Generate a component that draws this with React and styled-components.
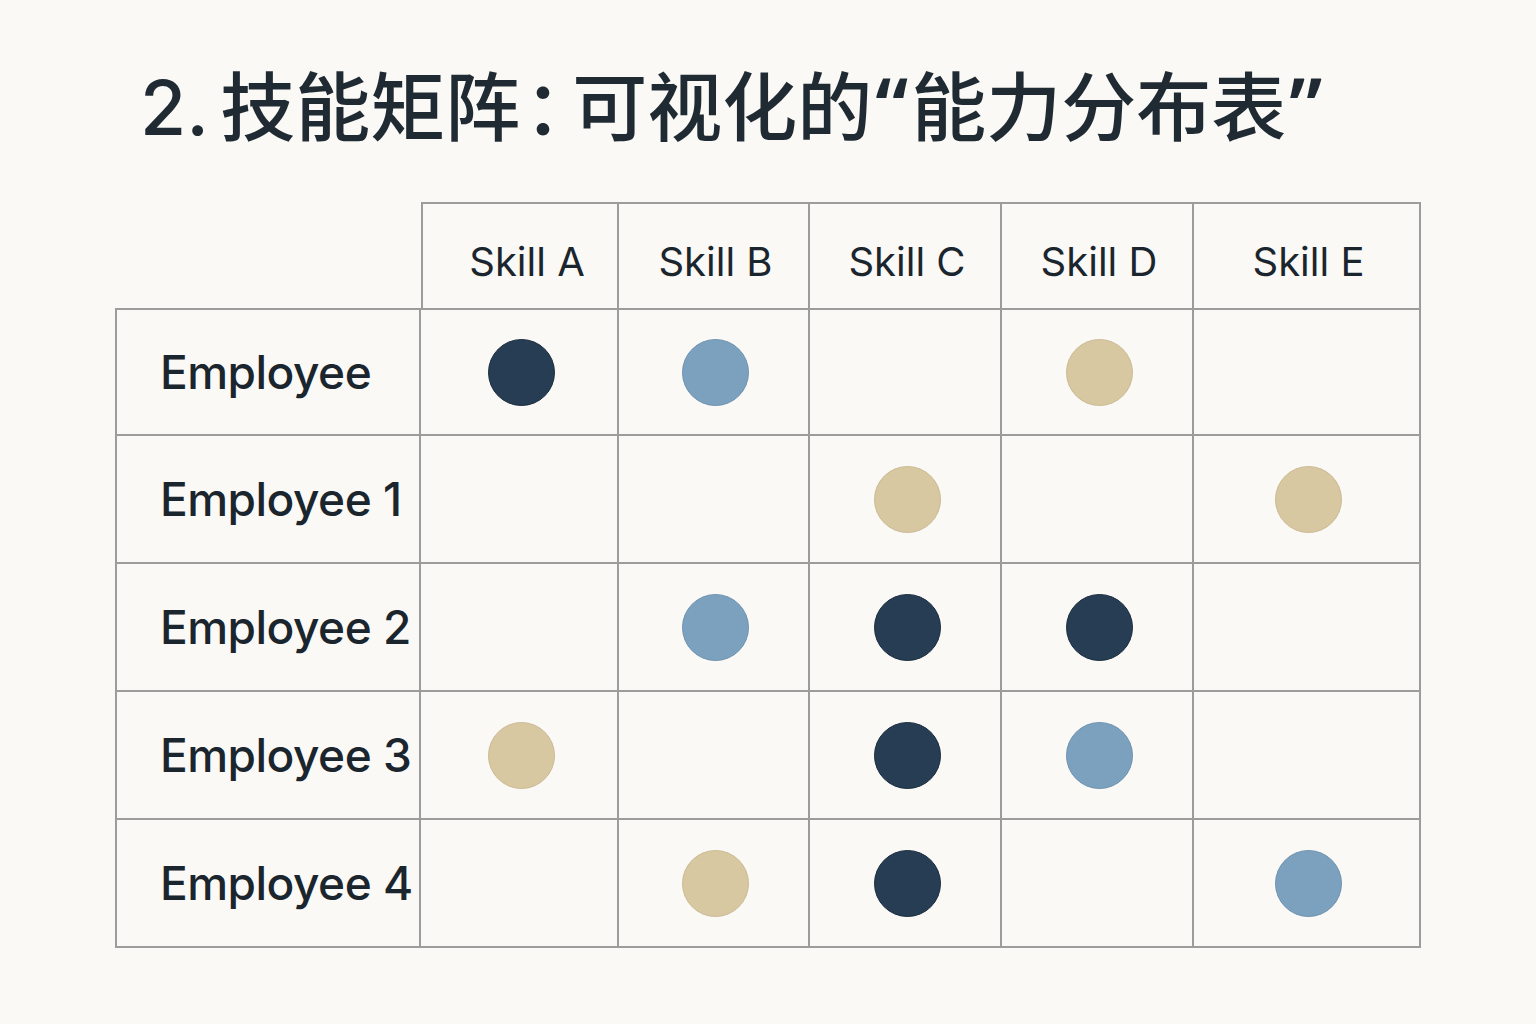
import React from "react";
import styled, { createGlobalStyle } from "styled-components";

const GlobalStyle = createGlobalStyle`
  html, body {
    margin: 0;
    padding: 0;
    background: #faf9f5;
  }
  body {
    font-family: Inter, "Noto Sans CJK SC", sans-serif;
    color: #1e2831;
  }
`;

const skills = ["Skill A", "Skill B", "Skill C", "Skill D", "Skill E"];

const rows = [
  { name: "Employee", levels: ["dark", "blue", null, "tan", null] },
  { name: "Employee 1", levels: [null, null, "tan", null, "tan"] },
  { name: "Employee 2", levels: [null, "blue", "dark", "dark", null] },
  { name: "Employee 3", levels: ["tan", null, "dark", "blue", null] },
  { name: "Employee 4", levels: [null, "tan", "dark", null, "blue"] },
];

const dotColors = {
  dark: { fill: "#263d53", edge: "#1a2c3d" },
  blue: { fill: "#7ca1bf", edge: "#6f93b0" },
  tan: { fill: "#d7c8a2", edge: "#cbbb93" },
};

const App = () => {
  return (
    <Page>
      <GlobalStyle />
      <Title>
        2. 技能矩阵<Colon>：</Colon>可视化的<Quote>“</Quote>能力分布表<Quote>”</Quote>
      </Title>
      <Matrix>
        <Corner />
        {skills.map((s, i) => (
          <HeaderCell key={s} $first={i === 0}>
            {s}
          </HeaderCell>
        ))}
        {rows.map((row, r) => (
          <React.Fragment key={row.name}>
            <NameCell $first={r === 0}>{row.name}</NameCell>
            {row.levels.map((lvl, c) => (
              <Cell key={c}>{lvl && <Dot $level={lvl} />}</Cell>
            ))}
          </React.Fragment>
        ))}
      </Matrix>
    </Page>
  );
};

const Page = styled.div`
  width: 1536px;
  height: 1024px;
  padding: 60px 0 0 0;
  box-sizing: border-box;
`;

const Title = styled.h1`
  margin: 0 0 0 140px;
  font-family: Inter, "Noto Sans CJK SC", sans-serif;
  font-size: 75px;
  font-weight: 500;
  line-height: 88px;
  word-spacing: -8px;
  color: #1f2a33;
  white-space: nowrap;
`;

const Colon = styled.span`
  margin-left: 4px;
  letter-spacing: -27px;
`;

const Quote = styled.span`
  font-family: "Noto Sans", sans-serif;
  font-weight: 600;
  font-size: 80px;
  margin: 0 3px;
`;

const Matrix = styled.div`
  display: grid;
  grid-template-columns: 306px 198px 191px 192px 192px 227px;
  grid-template-rows: 106px repeat(5, 128px);
  margin: 50px 0 0 115px;
  width: max-content;
`;

const line = "2px solid #9c9c9c";

const Corner = styled.div``;

const HeaderCell = styled.div`
  display: flex;
  align-items: center;
  justify-content: center;
  padding: 10px 0 0 ${(p) => (p.$first ? "14px" : "4px")};
  border-top: ${line};
  border-right: ${line};
  border-left: ${(p) => (p.$first ? line : "none")};
  font-size: 40px;
  font-weight: 400;
  color: #1b252e;
`;

const NameCell = styled.div`
  display: flex;
  align-items: center;
  padding-left: 43px;
  border-left: ${line};
  border-right: ${line};
  border-bottom: ${line};
  border-top: ${(p) => (p.$first ? line : "none")};
  font-size: 46px;
  font-weight: 500;
  letter-spacing: -0.5px;
  white-space: nowrap;
  color: #1b252e;
`;

const Cell = styled.div`
  display: flex;
  align-items: center;
  justify-content: center;
  padding-left: 4px;
  border-right: ${line};
  border-bottom: ${line};
  &:nth-child(-n + 12) {
    border-top: ${line};
  }
`;

const Dot = styled.span`
  width: 67px;
  height: 67px;
  border-radius: 50%;
  box-sizing: border-box;
  background: ${(p) => dotColors[p.$level].fill};
  border: 1px solid ${(p) => dotColors[p.$level].edge};
`;

export default App;
